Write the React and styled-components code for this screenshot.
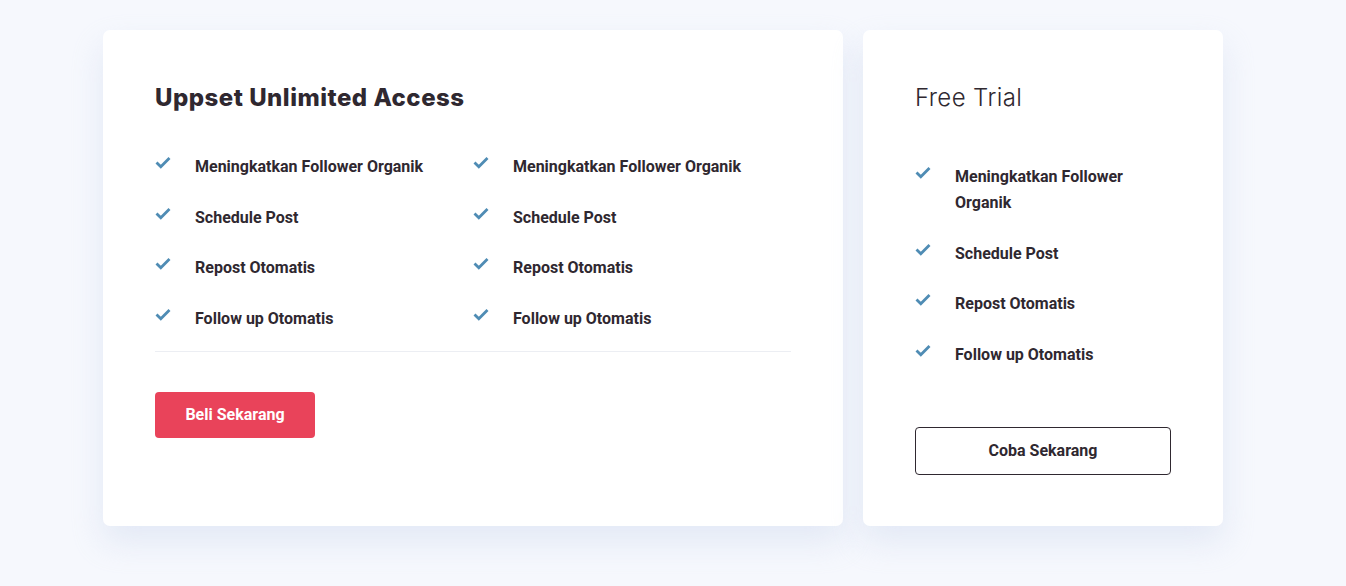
import React from "react";
import styled, { createGlobalStyle } from "styled-components";

const Global = createGlobalStyle`
  html, body { margin: 0; padding: 0; background: #f6f8fd; }
  body { font-family: Roboto, "Liberation Sans", sans-serif; }
`;

const Page = styled.div`
  display: flex;
  justify-content: flex-start;
  align-items: stretch;
  gap: 20px;
  padding: 30px 0 0 103px;
  height: 586px;
  box-sizing: border-box;
`;

const Card = styled.div`
  background: #fff;
  border-radius: 7px;
  box-shadow: 0 16px 32px rgba(205, 214, 238, 0.45);
  box-sizing: border-box;
  width: ${(p) => p.$w}px;
  height: 496px;
  padding: 53px 52px 0;
  display: flex;
  flex-direction: column;
`;

const Title = styled.h2`
  margin: 0;
  font-family: Inter, "Open Sans", sans-serif;
  font-weight: ${(p) => (p.$light ? 300 : 800)};
  font-size: 24px;
  line-height: 30px;
  color: #2f2830;
  letter-spacing: ${(p) => (p.$light ? "0.4px" : "0.5px")};
`;

const Grid = styled.ul`
  list-style: none;
  margin: ${(p) => p.$top}px 0 0;
  padding: 0;
  display: grid;
  grid-template-columns: ${(p) => (p.$cols === 2 ? "318px 318px" : "1fr")};
  grid-auto-flow: ${(p) => (p.$cols === 2 ? "column" : "row")};
  grid-template-rows: ${(p) => (p.$cols === 2 ? "repeat(4, auto)" : "none")};
  row-gap: 24.6px;
`;

const Item = styled.li`
  display: flex;
  align-items: flex-start;
  font-family: Roboto, "Liberation Sans", sans-serif;
  font-weight: 700;
  font-size: 16px;
  line-height: 26px;
  color: #2f2830;
`;

const CheckWrap = styled.span`
  flex: 0 0 40px;
  display: flex;
  padding-top: 2px;
`;

const Divider = styled.hr`
  border: 0;
  border-top: 1px solid #eceef3;
  margin: 19px 0 0;
  width: 100%;
`;

const PrimaryButton = styled.button`
  margin-top: 40px;
  align-self: flex-start;
  width: 160px;
  height: 46px;
  border: 0;
  border-radius: 4px;
  background: #e9435a;
  color: #fff;
  font-family: Roboto, "Liberation Sans", sans-serif;
  font-weight: 700;
  font-size: 16px;
  cursor: pointer;
`;

const OutlineButton = styled.button`
  margin-top: 59px;
  width: 100%;
  height: 48px;
  border: 1px solid #2f2830;
  border-radius: 4px;
  background: #fff;
  color: #2f2830;
  font-family: Roboto, "Liberation Sans", sans-serif;
  font-weight: 700;
  font-size: 16px;
  cursor: pointer;
`;

const Check = () => (
  <CheckWrap>
    <svg width="16" height="13" viewBox="0 0 16 13">
      <path d="M1.5 6.5 L5.8 10.8 L14.5 2" fill="none" stroke="#4f8cb4" strokeWidth="2.8" />
    </svg>
  </CheckWrap>
);

const features = [
  "Meningkatkan Follower Organik",
  "Schedule Post",
  "Repost Otomatis",
  "Follow up Otomatis",
];

export default function App() {
  return (
    <>
      <Global />
      <Page>
        <Card $w={740}>
          <Title>Uppset Unlimited Access</Title>
          <Grid $cols={2} $top={41}>
            {[...features, ...features].map((f, i) => (
              <Item key={i}>
                <Check />
                <span>{f}</span>
              </Item>
            ))}
          </Grid>
          <Divider />
          <PrimaryButton>Beli Sekarang</PrimaryButton>
        </Card>
        <Card $w={360}>
          <Title $light>Free Trial</Title>
          <Grid $cols={1} $top={51}>
            {features.map((f, i) => (
              <Item key={i}>
                <Check />
                <span>{f}</span>
              </Item>
            ))}
          </Grid>
          <OutlineButton>Coba Sekarang</OutlineButton>
        </Card>
      </Page>
    </>
  );
}
